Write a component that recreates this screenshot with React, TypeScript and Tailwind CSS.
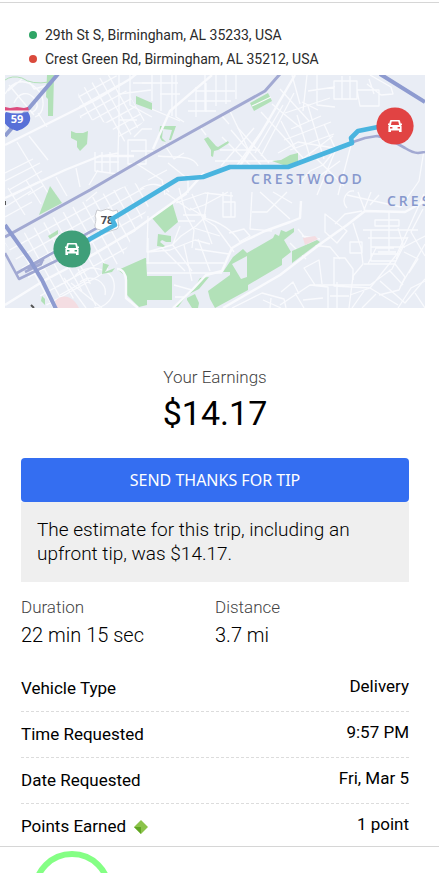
import React from "react";

const ROAD = "#f9fafd";
const PARK = "#b2e1b8";

const greens = [
  "M47 75h7l-1 41h-5v-17l-2-2z",
  "M71 131l5 2h7l5-2-1 13-7 7-3-4v-6l-6-3z",
  "M50 186l12 17-23 12z",
  "M136 96l16 7v7l-16-6z",
  "M118 270l27-12h1l1 18h25v24h-25v5l-8 2-12-12v-18z",
  "M172 202l6 20-13 11-13-15z",
  "M158 234l13 2v6h-5l-4-2-2 2 5 4-2 1-6-1z",
  "M208 291l22-16v-3h-7l10-15 10-8 4 4 26-15 2-4 4 2 2-6 5 2 8-4v4l-10 8 7 12-9 7v6l-34 20v5l-33 18-5-9z",
  "M292 263v-12l25-11 3 2z",
  "M173 307l22-20 5-9 9-1-10 12-12 6-9 12z",
  "M187 298l8-4 4 9-1 5h-6l-5-8z",
  "M250 103l18-10 4 8-18 10z",
  "M160 126h16l-5 14h-2l3-10-9-1-1 9 4 4-4-1-3-5z",
  "M204 139l4-2 8 9 2 1 10-6 1 2-11 7-4 1-1 6-2-1v-6z",
  "M272 161l9-1 9-5 8-2v8l-12 5z",
  "M48 236l10-6v4l-8 5z",
  "M103 263l6 2-4 7 10-4-3 4-10 2z",
  "M42 296l3 3v6l-4-4z",
];

const majorRoads = [
  "M173 308l20-19 13-14 16-4 10-23 10-6 23-11 25-9 10-4 1-17",
  "M223 308l57-33 43-33 24-17 18-14 40 1 20-11",
  "M5 145l90-45 35-21 10-8",
  "M5 198l60-28 35-14h34",
  "M117 269c6 0 9 6 9 11v18l12 10",
  "M212 75l-42 36-17 38",
  "M295 75l-34 58-22 34",
  "M5 305l40-25 46-24 45-27 50-36 18-20",
];

const streets = [
  "M5 94c8-14 20-16 31-6s8 26-1 29M14 103c5-11 14-12 20-5s3 12-3 15M9 85l25 30M22 79l-14 12M29 81l5 8 15-4",
  "M5 173l28-14M17 142l31 51M29 136l19 24M9 190l33-19M5 181l35-18M28 195l15-9M5 207l26-16M38 113l9 14",
  "M119 75v48l-1 30-15 3M119 94l32-4M130 75v30l22 12M133 83h19M128 140h18v24h-18zM134 137l8-8h10M131 151h22M119 120h18",
  "M95 152v19l23 3v-21M102 152v20M110 152v21M95 162h24M56 177l11 19M76 168l4 19M98 170l-9 15M86 201l11-9",
  "M142 105l38 16M172 75v41M161 75v36M152 75v26M142 83h36M160 94h20M176 75v42l8 5",
  "M196 87v30M206 83v29M216 75v31M226 75v29M236 75v24M196 91h39M188 101h43M188 111h28M205 75v36M200 127l6 8M229 109l20 42M213 119l8-4 8 9",
  "M222 137l30 30M231 130l30 35M238 128l31 35M254 128l-33 38M269 121l-34 47M220 150h40M215 161h62M261 112l43 47M272 104l30 25M280 89l29 32M283 105l-28 48M294 93l-33 63",
  "M292 75l8 29M307 75l-4 36M317 75v30l18 2M334 81h23v18h-23zM342 76v23M350 76v23M357 90h22v16h-19zM369 79l5 15M370 75l21 12 2 7-12 1-14-11M308 91l27-4M302 102l16 8M285 113l45-15",
  "M291 129l30-13M284 140l47-18M290 150l44-16M300 161l33-25M308 106l16 53M297 115l14 45M324 124l11 24M281 121l14 27M278 153l20-11 42 7M299 185l11-14 13-6 9-11",
  "M158 156c17 2 34-2 40 10M134 162l28 18 3 15M148 180l19-10M168 163l20 16M164 144l10 15 10-6M188 193v-17l10 1M140 189c10-7 22-6 29 3",
  "M166 193l24 17 14-5 24-13M179 188l7 27 8 15-2 18M192 194l11 25 9 25M208 192l-4 27 11 7 19 26M148 216l-1 36 25-7 9-9 15-10 10-10M148 252l22-2 25-10 15 4M146 263h78M147 273h75M161 247l24 24M172 244l20 27M180 226l-7 18",
  "M223 192v25h12v-15h-12M231 192v25M252 192l-2 37 22 2M252 212h15l20-20M260 192l30 27M273 192l19 11M229 233l15-4 6 7-11 6M203 218c17 3 31 14 37 24M194 228l26 8M174 285l18 5M175 297h9M184 245l8 36M198 239l12 32",
  "M176 203l29-10 28 3M183 215h23M190 208l16 10M178 221h17M157 213l30-19M195 249l34 5M148 264v-26",
  "M325 214l22 17-10 12-12-11zM335 224l10-10 17-3M347 208c-7-8 0-18 7-17M358 192l7 19M371 192l-7 18M298 229l13 16 19 2 10 12M290 243l16 16M302 236l18 3",
  "M353 223l8 25 2 16-10 12-4 32M363 230h55M368 238h39M371 230v31h25M371 247h34M371 254h29M389 212v39M375 220h24v6h-24zM398 228l5 16-7 15M350 242h12v11h-12zM423 209l-12 23 14 24M364 264h31l10 13-6 13-20 5M368 264l8-16h18M378 252h18",
  "M334 257v29l36 2 27-34 27-60M334 258h11l8 11v11M310 285h60l22-16 16-32M280 305l30-20 18 2v21M315 285l-11-17 15-8 3 24M370 288l28 17M380 281l25 22 20-24M389 270l14 15M350 295l20-7M330 296h19M337 282v26M303 300l20-2M295 293l9 15M281 292l12-10 6 12",
  "M398 308l13-20 14-7M415 293l10 15M352 308l12-17M376 294l-14 14M404 247l21-11M404 252l14 7-9 14M370 205l9-10M425 244l-25 43",
  "M232 308l30-15 22 6 2 9M263 300l18 8M271 298l-1 10M424 150l-5 31-18 26-54-12M336 149l-19 46M351 145l-13 50M340 161l-30 22M316 158l28 28",
  "M75 276c11-14 37-8 39 7s-9 25-20 25M80 282c12-9 28 0 25 13M71 283l31 25M78 269l18 37M64 278l22 30M57 287l28-16M60 295l27-15",
];

function gridPath(x: number, y: number, cols: number, rows: number, gap: number) {
  const lines: string[] = [];
  for (let i = 0; i <= cols; i++) lines.push(`M${x + i * gap} ${y}v${rows * gap}`);
  for (let i = 0; i <= rows; i++) lines.push(`M${x} ${y + i * gap}h${cols * gap}`);
  return lines.join("");
}

function Marker({ x, y, color }: { x: number; y: number; color: string }) {
  return (
    <g transform={`translate(${x} ${y})`}>
      <circle r="18.6" fill={color} />
      <path
        fill="#fff"
        fillRule="evenodd"
        d="M-4-6h8q.8 0 1 .8l.7 2.700H7v1.500H6l.6.9V6H4V4.500h-8V6h-2.600V-.1l.6-.9h-1v-1.500h1.300l.7-2.700q.2-.8 1-.8zM-3.300-4.500l-.8 3.500h8.200l-.8-3.500zM-5 1v1.600h2.400V1zM5 1v1.600H2.600V1z"
      />
    </g>
  );
}

function TripMap() {
  return (
    <svg viewBox="5 75 420 233" className="block w-full" role="img" aria-label="Trip route map">
      <defs>
        <clipPath id="north"><path d="M78 91l35-21 32 50-22 23-15-20-28-5z" /></clipPath>
        <clipPath id="west"><path d="M5 243l85-45 45-15 20 11-36 69-18 12-40 34H49z" /></clipPath>
      </defs>
      <rect x="5" y="75" width="420" height="233" fill="#e9edf5" />
      <g fill="none" stroke={ROAD} strokeWidth="1.3" strokeLinejoin="round">
        {streets.map((d) => <path key={d} d={d} />)}
        <g clipPath="url(#north)">
          <path d={gridPath(0, 0, 8, 8, 9)} transform="translate(67 93) rotate(-29)" />
        </g>
        <g clipPath="url(#west)">
          <path d={gridPath(0, 0, 16, 10, 11)} transform="translate(-6 246) rotate(-29)" />
        </g>
        <path d="M8 188l17 27M26 180l15 24M5 217l27-15M12 196l26-14" />
      </g>
      <g fill={PARK}>{greens.map((d) => <path key={d} d={d} />)}</g>
      <path d="M232 264l15-8v21l-6 2z" fill="#e9edf5" />
      <path d="M252 106l19-9" stroke={ROAD} strokeWidth="1.2" />
      <path d="M5 80q7-5 17-2 10 7 27 4" fill="none" stroke={PARK} strokeWidth="1" />
      <path d="M303 238l12-2 3 3-13 6zM55 301c8-8 18-5 24 7H57z" fill="#f4dde2" />
      <g fill="none" stroke={ROAD} strokeWidth="2.4" strokeLinejoin="round">
        {majorRoads.map((d) => <path key={d} d={d} />)}
      </g>
      <g fill="none" stroke="#a2a9d2" strokeWidth="2.6" strokeLinejoin="round">
        <path d="M5 237l85-47 60-35 115-64 15-17" strokeWidth="3" />
        <path d="M5 253l14 26 41-20M17 273l80-45M25 272l16-8 2-5M27 268l17-9" />
        <path d="M353 142l12-4 12-2 12 3 16 9q8 5 13 5l7-1" />
      </g>
      <g fill="none" stroke="#8e9bd0" strokeWidth="4">
        <path d="M58 74L30 107 5 136M380 74l45 28M5 225l25 35 12 20 14 29" />
      </g>
      <path d="M31 305l3 3M5 201v4" stroke="#555" strokeWidth="2" />
      <path d="M6 112q11 3 22 0c6 9-1 16-11 19C6 128 0 121 6 112z" fill="#5870d7" />
      <path d="M5 107l5 1 7-1 7 1 4-1 1 4H5z" fill="#dc4c7e" />
      <path d="M5 111h25" stroke="#fff" strokeWidth="1" />
      <text x="17" y="123" textAnchor="middle" fill="#fff" className="font-['Open_Sans',sans-serif] text-[11px] font-bold">59</text>
      <path d="M97 210l4 1 6-2 6 2 4-1 2 6c-3 5 2 10-2 13l-10 3-10-3c-5-3 1-8-2-13z" fill="#fff" stroke="#c9cbd0" strokeWidth="1" />
      <text x="107" y="224" textAnchor="middle" fill="#4b4e55" className="font-['Open_Sans',sans-serif] text-[11px] font-bold">78</text>
      <path
        d="M72 251l18-12 25-14-3-6 38-23 28-17 25-2 27-10h58l64-24-1-5 7-7 20-4"
        fill="none" stroke="#49b4df" strokeWidth="4.6" strokeLinejoin="round"
      />
      <g fill="#8798cd" className="font-['Open_Sans',sans-serif] text-[14px] font-semibold">
        <text x="251" y="184" className="tracking-[3px]">CRESTWOOD</text>
        <text x="387" y="206" className="tracking-[3px]">CRES</text>
      </g>
      <Marker x={72} y={249} color="#3f9f79" />
      <Marker x={395} y={126} color="#e14343" />
    </svg>
  );
}

function Address({ dot, children }: { dot: string; children: string }) {
  return (
    <li className="flex h-6 items-center gap-2">
      <span className={`size-2 rounded-full ${dot}`} />
      {children}
    </li>
  );
}

function Stat({ label, value }: { label: string; value: string }) {
  return (
    <div className="flex-1">
      <dt className="text-[17px] leading-6 text-[#444]">{label}</dt>
      <dd className="mt-1 text-xl leading-6 text-black">{value}</dd>
    </div>
  );
}

function Row({ label, value, icon }: { label: string; value: string; icon?: React.ReactNode }) {
  return (
    <div className="flex h-[46px] items-center justify-between border-b border-dashed border-[#dcdcdc] last:h-[42px] last:border-0 last:pt-1">
      <dt className="flex items-center gap-2">
        {label}
        {icon}
      </dt>
      <dd className="pb-1">{value}</dd>
    </div>
  );
}

function Diamond() {
  return (
    <svg viewBox="0 0 14 14" className="size-[14px]" aria-hidden="true">
      <path d="M7 0l7 7-7 7-7-7z" fill="#8bc34a" />
      <path d="M0 7h7v7z" fill="#5fa522" />
    </svg>
  );
}

export default function App() {
  return (
    <main className="overflow-hidden bg-white pt-[2px] font-['Roboto',sans-serif] text-black">
      <header className="border-t border-[#d6d6d6] pt-5">
        <ul className="pl-[29px] text-sm text-[#2b2b2b]">
          <Address dot="bg-[#2fa566]">29th St S, Birmingham, AL 35233, USA</Address>
          <Address dot="bg-[#da4a3c]">Crest Green Rd, Birmingham, AL 35212, USA</Address>
        </ul>
        <div className="mt-1 mr-[14px] ml-[5px]">
          <TripMap />
        </div>
      </header>
      <div className="mr-[30px] ml-[21px]">
        <section className="pt-[57px] text-center">
          <h2 className="text-[17px] leading-6 font-light text-[#444]">Your Earnings</h2>
          <p className="text-[34px] leading-12">$14.17</p>
        </section>
        <button type="button" className="mt-[21px] block h-11 w-full rounded bg-[#346ef1] font-['Noto_Sans',sans-serif] text-base text-white">
          SEND THANKS FOR TIP
        </button>
        <p className="bg-[#efefef] p-4 text-[19px] leading-6 font-light">
          The estimate for this trip, including an upfront tip, was $14.17.
        </p>
        <dl className="flex pt-[13px] font-light">
          <Stat label="Duration" value="22 min 15 sec" />
          <Stat label="Distance" value="3.7 mi" />
        </dl>
        <dl className="mt-[19px] text-[17px]">
          <Row label="Vehicle Type" value="Delivery" />
          <Row label="Time Requested" value="9:57 PM" />
          <Row label="Date Requested" value="Fri, Mar 5" />
          <Row label="Points Earned" value="1 point" icon={<Diamond />} />
        </dl>
      </div>
      <footer className="h-[28px] overflow-hidden border-t border-[#d6d6d6] pt-1 pl-8">
        <div className="size-20 rounded-full border-6 border-[#84ff84]" />
      </footer>
    </main>
  );
}
